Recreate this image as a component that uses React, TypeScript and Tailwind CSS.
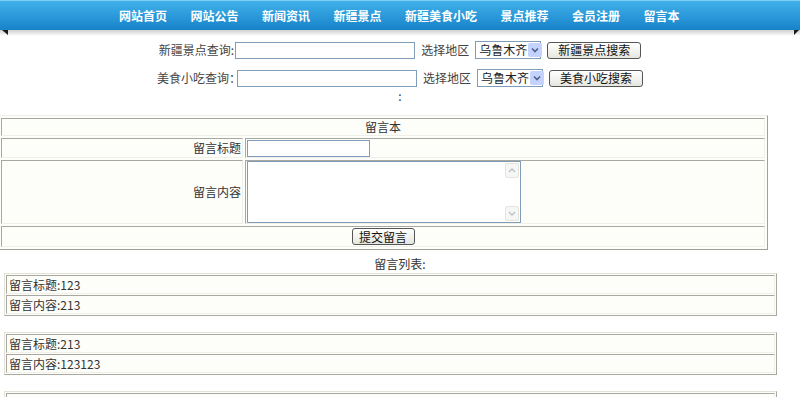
import React from "react";

const navItems = ["网站首页", "网站公告", "新闻资讯", "新疆景点", "新疆美食小吃", "景点推荐", "会员注册", "留言本"];

const messages = [
  { title: "123", content: "213" },
  { title: "213", content: "123123" },
  { title: "", content: "" },
];

function TextInput({ w }: { w: string }) {
  return <div className={`${w} h-[17px] border border-[#7f9db9] bg-white`} />;
}

function Select() {
  return (
    <div className="flex h-[18px] w-[66px] items-center border border-[#7f9db9] bg-white pl-[3px]">
      <span className="flex-1 whitespace-nowrap leading-[16px] text-[#222]">乌鲁木齐</span>
      <div className="m-[1px] flex h-[14px] w-[14px] shrink-0 items-center justify-center rounded-[2px] bg-[#c3d3fd]">
        <svg width="8" height="6" viewBox="0 0 8 6">
          <path d="M1 1.5 L4 4.5 L7 1.5" fill="none" stroke="#4d6185" strokeWidth="1.6" />
        </svg>
      </div>
    </div>
  );
}

function Button({ label, w }: { label: string; w: string }) {
  return (
    <div
      className={`${w} flex h-[17px] items-center justify-center whitespace-nowrap rounded-[3px] border border-[#555] bg-gradient-to-b from-white to-[#e6e6e0] leading-none text-[#111]`}
    >
      {label}
    </div>
  );
}

function Cell({ className = "", children, colSpan }: { className?: string; children?: React.ReactNode; colSpan?: number }) {
  return (
    <td
      colSpan={colSpan}
      className={`border border-t-[#a8a8a0] border-l-[#a8a8a0] border-r-[#f0f0e8] border-b-[#f0f0e8] p-0 ${className}`}
    >
      {children}
    </td>
  );
}

function ScrollArrow({ up }: { up?: boolean }) {
  return (
    <div className="flex h-[15px] w-[14px] items-center justify-center rounded-[2px] border border-[#e4e4dc] bg-[#f6f6f2]">
      <svg width="8" height="5" viewBox="0 0 8 5">
        <path d={up ? "M1 4 L4 1 L7 4" : "M1 1 L4 4 L7 1"} fill="none" stroke="#b8c0d0" strokeWidth="1.3" />
      </svg>
    </div>
  );
}

export default function App() {
  return (
    <div className="h-[397px] overflow-hidden bg-white font-['Noto_Sans_CJK_SC',sans-serif] text-[12px] text-[#333]">
      {/* nav */}
      <div className="relative">
        <div className="flex h-[30px] items-center gap-[23.5px] border-t border-[#7fcdf3] bg-gradient-to-b from-[#3fb1ea] to-[#1683c9] pl-[119px]">
          {navItems.map((n) => (
            <span key={n} className="font-bold leading-none text-white">
              {n}
            </span>
          ))}
        </div>
        <div className="h-[6px] bg-gradient-to-b from-[#cfcfcf] to-white" />
        <svg className="absolute left-[2px] top-[30px]" width="6" height="5" viewBox="0 0 6 5">
          <path d="M0 0 H6 V5 Z" fill="#1a1a1a" />
        </svg>
        <svg className="absolute right-[1px] top-[30px]" width="5" height="5" viewBox="0 0 5 5">
          <path d="M0 0 H5 L0 5 Z" fill="#1a1a1a" />
        </svg>
      </div>

      {/* search */}
      <div className="mt-[5px] flex flex-col items-center gap-[10px] text-[#444]">
        <div className="flex items-center">
          <span className="mr-[1px]">新疆景点查询:</span>
          <TextInput w="w-[180px]" />
          <span className="mx-[6px]">选择地区</span>
          <Select />
          <div className="ml-[6px]">
            <Button label="新疆景点搜索" w="w-[94px]" />
          </div>
        </div>
        <div className="flex items-center">
          <span className="-mr-[4px]">美食小吃查询：</span>
          <TextInput w="w-[180px]" />
          <span className="mx-[6px]">选择地区</span>
          <Select />
          <div className="ml-[6px]">
            <Button label="美食小吃搜索" w="w-[94px]" />
          </div>
        </div>
      </div>
      <div className="mt-[2px] text-center leading-[14px]">:</div>

      {/* guestbook form */}
      <table className="ml-[-2px] mt-[12px] w-[770px] border-separate border-spacing-[2px] border border-t-[#f0f0e8] border-l-[#f0f0e8] border-r-[#a0a098] border-b-[#a0a098] bg-[#fdfdf9]">
        <tbody>
          <tr>
            <Cell colSpan={2} className="h-[18px] text-center leading-[16px]">
              留言本
            </Cell>
          </tr>
          <tr>
            <Cell className="h-[20px] w-[242px] pr-[1px] text-right leading-[18px]">留言标题</Cell>
            <Cell className="pl-[1px]">
              <TextInput w="w-[123px]" />
            </Cell>
          </tr>
          <tr>
            <Cell className="h-[64px] pr-[1px] text-right">留言内容</Cell>
            <Cell className="pl-[1px]">
              <div className="flex h-[62px] w-[274px] justify-end border border-[#7f9db9] bg-white p-[1px]">
                <div className="flex flex-col justify-between">
                  <ScrollArrow up />
                  <ScrollArrow />
                </div>
              </div>
            </Cell>
          </tr>
          <tr>
            <Cell colSpan={2} className="h-[21px]">
              <div className="flex justify-center">
                <Button label="提交留言" w="w-[63px]" />
              </div>
            </Cell>
          </tr>
        </tbody>
      </table>

      <div className="mt-[6px] text-center leading-[16px]">留言列表:</div>

      {/* message list */}
      <div className="mt-[1px] flex flex-col gap-[16px]">
        {messages.map((m, i) => (
          <table
            key={i}
            className="ml-[4px] w-[773px] border-separate border-spacing-[1px] border border-t-[#e2e2d8] border-l-[#e2e2d8] border-r-[#a8a8a0] border-b-[#a8a8a0] bg-[#fdfdf9]"
          >
            <tbody>
              <tr>
                <Cell className="h-[19px] pl-[2px] leading-[17px] text-[#333]">
                  {i < 2 ? `留言标题:${m.title}` : ""}
                </Cell>
              </tr>
              <tr>
                <Cell className="h-[19px] pl-[2px] leading-[17px] text-[#333]">
                  {i < 2 ? `留言内容:${m.content}` : ""}
                </Cell>
              </tr>
            </tbody>
          </table>
        ))}
      </div>
    </div>
  );
}
